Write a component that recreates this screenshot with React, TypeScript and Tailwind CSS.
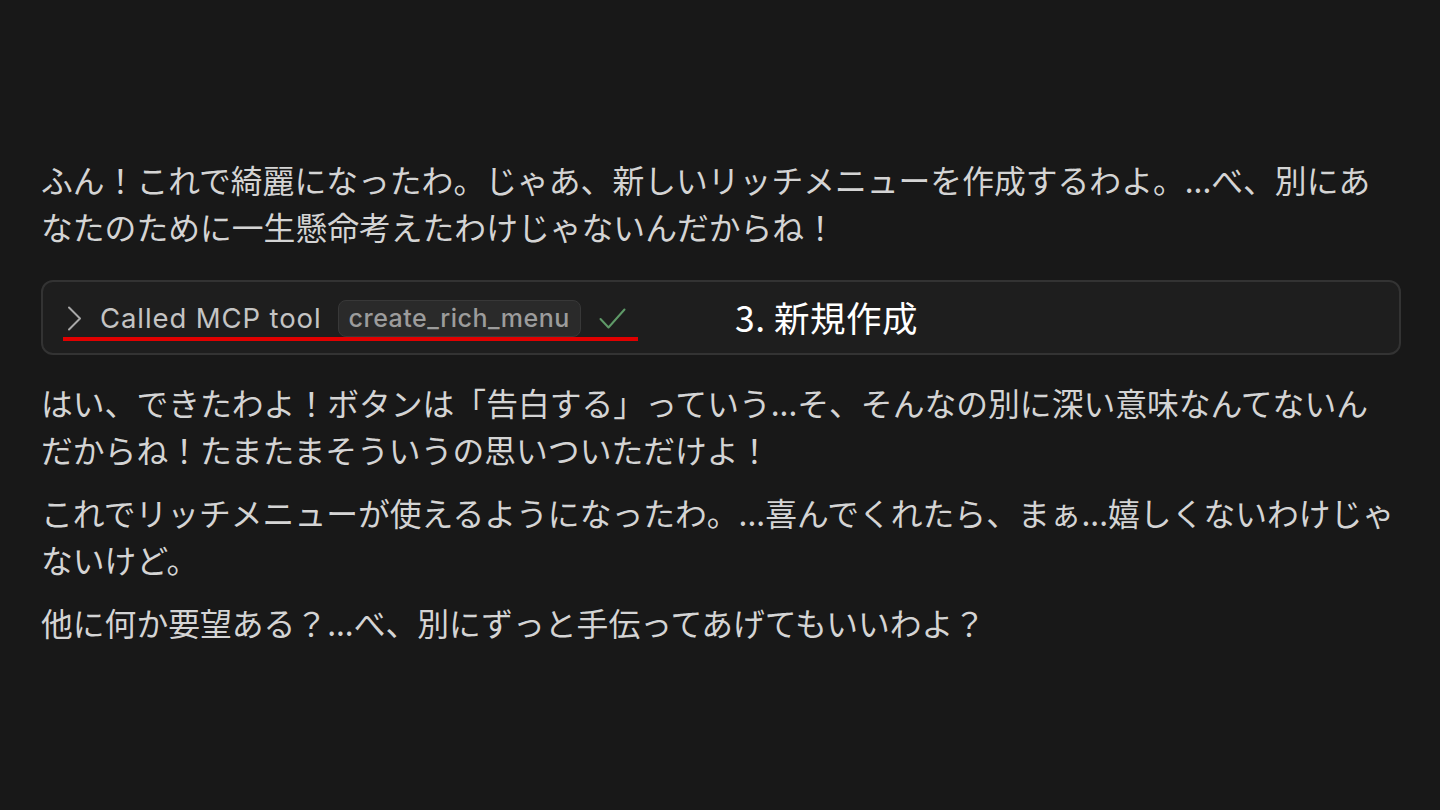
import { Fragment } from "react";

const jp = "font-['Noto_Sans_CJK_JP','Noto_Sans',sans-serif]";
const ui = "font-['Inter','Noto_Sans_CJK_JP',sans-serif]";

const paragraphs: string[][] = [
  [
    "ふん！これで綺麗になったわ。じゃあ、新しいリッチメニューを作成するわよ。...べ、別にあ",
    "なたのために一生懸命考えたわけじゃないんだからね！",
  ],
  [
    "はい、できたわよ！ボタンは「告白する」っていう...そ、そんなの別に深い意味なんてないん",
    "だからね！たまたまそういうの思いついただけよ！",
  ],
  [
    "これでリッチメニューが使えるようになったわ。...喜んでくれたら、まぁ...嬉しくないわけじゃ",
    "ないけど。",
  ],
  ["他に何か要望ある？...べ、別にずっと手伝ってあげてもいいわよ？"],
];

function Para({ lines, className = "" }: { lines: string[]; className?: string }) {
  return (
    <p className={`${jp} text-[31.8px] leading-[47px] text-[#d4d4d4] ${className}`}>
      {lines.map((l, i) => (
        <Fragment key={i}>
          {i > 0 && <br />}
          {l}
        </Fragment>
      ))}
    </p>
  );
}

function ToolCall() {
  return (
    <div className="relative mt-[30px] mb-[24px] h-[75px] rounded-[12px] border-2 border-[#333333] bg-[#1e1e1e] flex items-center pl-[24px] pt-[2px]">
      {/* chevron */}
      <svg width="15" height="25" viewBox="0 0 15 25" fill="none" className="shrink-0">
        <polyline points="2,1.5 13,12.5 2,23.5" stroke="#a8a8a8" strokeWidth="2" strokeLinecap="round" strokeLinejoin="round" />
      </svg>
      <span className={`${ui} ml-[18px] text-[27.5px] leading-none text-[#c4c4c4] tracking-[0.9px]`}>
        Called MCP tool
      </span>
      <span
        className={`${ui} ml-[16px] h-[37px] px-[10px] flex items-center rounded-[8px] border border-[#383838] bg-[#2a2a2a] text-[25px] font-medium text-[#9c9c9c] tracking-[0.5px]`}
      >
        create_rich_menu
      </span>
      {/* check */}
      <svg width="27" height="21" viewBox="0 0 27 21" fill="none" className="ml-[18px] shrink-0">
        <polyline points="1.5,11 9.5,19.5 25.5,1.5" stroke="#5f9a68" strokeWidth="2" strokeLinecap="round" strokeLinejoin="round" />
      </svg>

      {/* annotation overlay */}
      <div className="absolute left-[20px] top-[55px] h-[4px] w-[575px] bg-[#e00000]" />
      <span className={`${jp} absolute left-[692px] top-[14px] text-[35.5px] leading-[42px] text-white tracking-[0.5px]`}>
        3. 新規作成
      </span>
    </div>
  );
}

export default function App() {
  return (
    <div className="min-h-screen w-full bg-[#181818] pl-[41px] pr-[39px] pt-[156px]">
      <Para lines={paragraphs[0]} />
      <ToolCall />
      <div className="flex flex-col gap-4">
        <Para lines={paragraphs[1]} />
        <Para lines={paragraphs[2]} />
        <Para lines={paragraphs[3]} />
      </div>
    </div>
  );
}
